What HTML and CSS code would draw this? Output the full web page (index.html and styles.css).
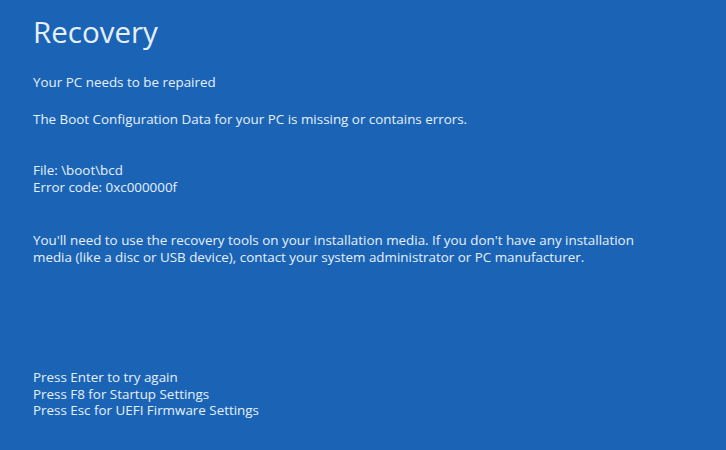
FILE: index.html
```html
<!DOCTYPE html>
<html>
<head>
<meta charset="utf-8">
<link rel="stylesheet" href="styles.css">
</head>
<body>
<main class="screen">
  <h1 class="title">Recovery</h1>
  <p class="line first">Your PC needs to be repaired</p>
  <p class="line gap1">The Boot Configuration Data for your PC is missing or contains errors.</p>
  <p class="line gap2">File: \boot\bcd<br>Error code: 0xc000000f</p>
  <p class="line gap3">You'll need to use the recovery tools on your installation media. If you don't have any installation<br>media (like a disc or USB device), contact your system administrator or PC manufacturer.</p>
  <p class="line gap4">Press Enter to try again<br>Press F8 for Startup Settings<br>Press Esc for UEFI Firmware Settings</p>
</main>
</body>
</html>
```
FILE: styles.css
```css
html, body {
  margin: 0;
  padding: 0;
  background: #1b64b5;
}
.screen {
  width: 726px;
  height: 450px;
  box-sizing: border-box;
  padding: 12px 0 0 33px;
  background: #1b64b5;
  color: #e6f0fc;
  font-family: "Open Sans", "Liberation Sans", sans-serif;
  overflow: hidden;
}
.title {
  margin: 0;
  font-weight: 400;
  font-size: 29.5px;
  line-height: 40px;
}
.line {
  margin: 0;
  font-size: 13.4px;
  line-height: 16.5px;
}
.first { margin-top: 22px; }
.gap1 { margin-top: 20px; }
.gap2 { margin-top: 35px; }
.gap3 { margin-top: 37px; }
.gap4 { margin-top: 104px; }
```
